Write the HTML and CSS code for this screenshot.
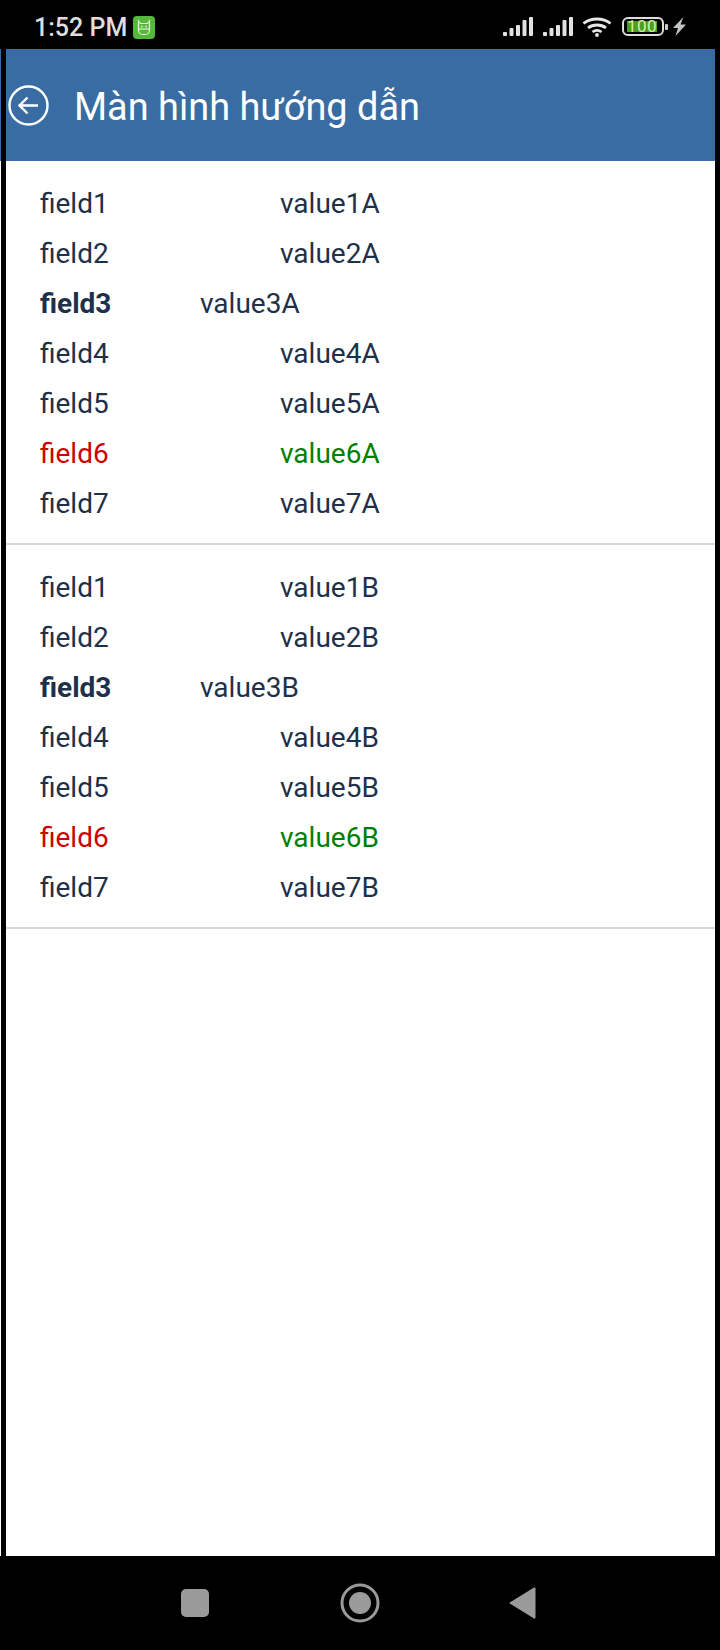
FILE: index.html
```html
<!DOCTYPE html>
<html lang="en">
<head>
  <meta charset="UTF-8">
  <meta name="viewport" content="width=device-width, initial-scale=1.0">
  <title>Màn hình hướng dẫn</title>
  <link rel="stylesheet" href="styles.css">
</head>
<body>
  <div class="status-bar">
    <div class="status-left">
      <span class="clock">1:52 PM</span>
      <svg width="22" height="23" viewBox="0 0 22 23">
        <rect width="22" height="23" rx="4" fill="#55b83c"/>
        <path d="M5.500 5l2 2.500h7l2-2.500v9a4.500 4.500 0 0 1-4.500 4.500h-2a4.500 4.500 0 0 1-4.500-4.500z" fill="none" stroke="#e4f5dc" stroke-width="1.200"/>
        <path d="M5.500 13h11" stroke="#e4f5dc" stroke-width="1.100"/>
        <circle cx="8.800" cy="10.500" r=".9" fill="#e4f5dc"/>
        <circle cx="13.200" cy="10.500" r=".9" fill="#e4f5dc"/>
      </svg>
    </div>
    <div class="status-right">
      <svg class="signal" width="30" height="19" viewBox="0 0 30 19" fill="#e2e2e2">
        <rect x="0" y="15" width="4" height="4" rx="1"/>
        <rect x="6.500" y="11" width="4" height="8" rx="1"/>
        <rect x="13" y="8" width="4" height="11" rx="1"/>
        <rect x="19.500" y="3" width="4" height="16" rx="1"/>
        <rect x="26" y="0" width="4" height="19" rx="1"/>
      </svg>
      <svg class="signal" width="30" height="19" viewBox="0 0 30 19" fill="#e2e2e2">
        <rect x="0" y="15" width="4" height="4" rx="1"/>
        <rect x="6.500" y="11" width="4" height="8" rx="1"/>
        <rect x="13" y="8" width="4" height="11" rx="1"/>
        <rect x="19.500" y="3" width="4" height="16" rx="1"/>
        <rect x="26" y="0" width="4" height="19" rx="1"/>
      </svg>
      <svg class="wifi" width="30" height="20" viewBox="0 0 30 20" fill="none" stroke="#e8e8e8" stroke-width="2.800">
        <path d="M1.500 6.500C9 .5 21 .5 28.500 6.500"/>
        <path d="M6 11c5-4 13-4 18 0"/>
        <path d="M10.500 15c2.700-2 6.300-2 9 0"/>
        <circle cx="15" cy="18" r="1.900" fill="#e8e8e8" stroke="none"/>
      </svg>
      <div class="battery">
        <div class="battery-body"><span class="battery-fill">100</span></div>
        <div class="battery-tip"></div>
      </div>
      <svg class="bolt" width="13" height="19" viewBox="0 0 13 19"><path d="M10.500 0L0 11h5L2.500 19 13 7.500H7.500z" fill="#c4c4c4"/></svg>
    </div>
  </div>

  <div class="main">
    <div class="edge"></div>
    <div class="screen">
      <div class="app-header">
        <svg class="back-icon" width="41" height="41" viewBox="0 0 41 41" fill="none" stroke="#fff" stroke-width="2.400">
          <circle cx="20.500" cy="20.500" r="19"/>
          <path d="M30 20.500H11.500M19.500 12.500l-8 8 8 8"/>
        </svg>
        <span class="app-title">Màn hình hướng dẫn</span>
      </div>

      <div class="group">
        <div class="row"><span class="field">field1</span><span class="value">value1A</span></div>
        <div class="row"><span class="field">field2</span><span class="value">value2A</span></div>
        <div class="row row-strong"><span class="field">field3</span><span class="value">value3A</span></div>
        <div class="row"><span class="field">field4</span><span class="value">value4A</span></div>
        <div class="row"><span class="field">field5</span><span class="value">value5A</span></div>
        <div class="row row-status"><span class="field">field6</span><span class="value">value6A</span></div>
        <div class="row"><span class="field">field7</span><span class="value">value7A</span></div>
      </div>

      <div class="group">
        <div class="row"><span class="field">field1</span><span class="value">value1B</span></div>
        <div class="row"><span class="field">field2</span><span class="value">value2B</span></div>
        <div class="row row-strong"><span class="field">field3</span><span class="value">value3B</span></div>
        <div class="row"><span class="field">field4</span><span class="value">value4B</span></div>
        <div class="row"><span class="field">field5</span><span class="value">value5B</span></div>
        <div class="row row-status"><span class="field">field6</span><span class="value">value6B</span></div>
        <div class="row"><span class="field">field7</span><span class="value">value7B</span></div>
      </div>
    </div>
  </div>

  <div class="nav-bar">
    <svg width="30" height="30" viewBox="0 0 30 30"><rect x="1" y="1" width="28" height="28" rx="5" fill="#9a9a9a"/></svg>
    <svg class="nav-home" width="40" height="40" viewBox="0 0 40 40">
      <circle cx="20" cy="20" r="18" fill="none" stroke="#9a9a9a" stroke-width="3"/>
      <circle cx="20" cy="20" r="11" fill="#9a9a9a"/>
    </svg>
    <svg width="28" height="34" viewBox="0 0 28 34"><path d="M1 17L26 1.500q1.500-.5 1.500 1v29q0 1.500-1.500 1z" fill="#9a9a9a"/></svg>
  </div>
</body>
</html>
```

FILE: styles.css
```css
html, body {
  margin: 0;
  padding: 0;
}

body {
  width: 720px;
  height: 1650px;
  background-color: #000;
  font-family: Roboto, sans-serif;
  display: flex;
  flex-direction: column;
  overflow: hidden;
}

.status-bar {
  height: 49px;
  box-sizing: border-box;
  display: flex;
  align-items: center;
  justify-content: space-between;
  padding: 4px 34px 0 34px;
  color: #dedede;
}

.status-left, .status-right {
  display: flex;
  align-items: center;
}

.status-left {
  margin-top: 2px;
}

.clock {
  font-size: 25px;
  font-weight: 500;
  margin-right: 6px;
}

.signal {
  margin-right: 9.5px;
}

.wifi {
  margin-right: 10px;
}

.bolt {
  margin-left: 5px;
}

.battery {
  display: flex;
  align-items: center;
}

.battery-body {
  width: 42px;
  height: 19px;
  box-sizing: border-box;
  padding: 2px 3px 2px 3px;
  border: 2.5px solid #ddd;
  border-radius: 6px;
}

.battery-fill {
  display: block;
  height: 100%;
  margin-right: 2px;
  background-color: #4c9e22;
  color: #cdf0a8;
  font-size: 17px;
  line-height: 11px;
  text-align: center;
  letter-spacing: .5px;
}

.battery-tip {
  width: 3px;
  height: 6px;
  margin-left: 1px;
  border-radius: 1px;
  background-color: #ccc;
}

.main {
  flex: 1;
  display: flex;
}

/* sliver of the page behind, shows at the left edge */
.edge {
  width: 1px;
  margin-right: 5px;
  background: linear-gradient(#386ca3 112px, #fff 112px);
}

.screen {
  flex: 1;
  margin-right: 5px;
  background-color: #fff;
}

.app-header {
  height: 112px;
  display: flex;
  align-items: center;
  padding-left: 2px;
  background-color: #386ca3;
  color: #fff;
}

.back-icon {
  margin: 1px 25px 0 0;
}

.app-title {
  font-size: 37.9px;
  margin-top: 4px;
}

.group {
  padding: 17px 0 15px;
  border-bottom: 2px solid #d8d8d8;
}

.row {
  display: flex;
  height: 50px;
  align-items: center;
  padding-left: 34px;
  font-size: 28px;
  color: #1f3049;
}

.field {
  width: 240px;
}

.row-strong .field {
  width: 160px;
  font-weight: 700;
}

.row-status .field {
  color: #cc0000;
}

.row-status .value {
  color: #008000;
}

.nav-bar {
  height: 94px;
  display: flex;
  align-items: center;
  justify-content: space-between;
  padding: 0 184px 0 180px;
}

.nav-home {
  margin-left: 2px;
}
```
